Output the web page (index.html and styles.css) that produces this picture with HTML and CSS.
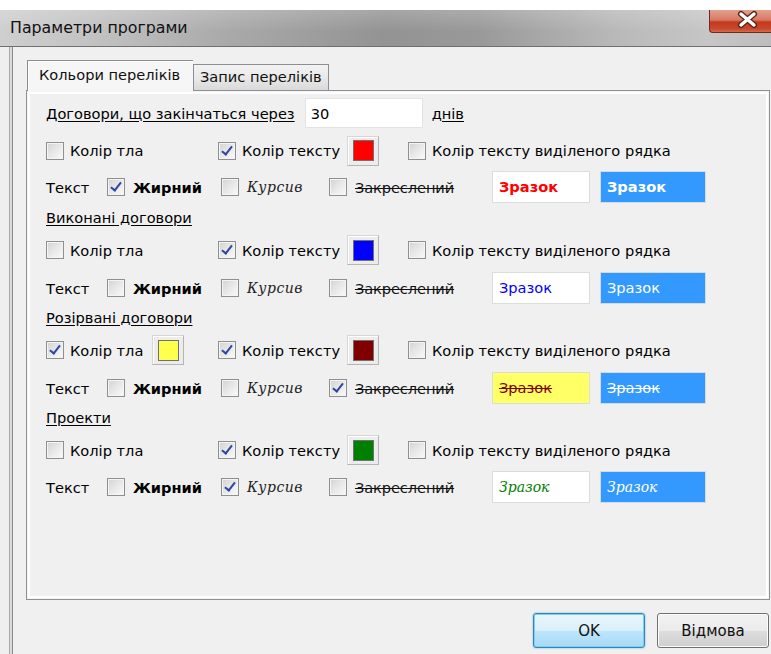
FILE: index.html
```html
<!DOCTYPE html>
<html lang="uk">
<head>
<meta charset="utf-8">
<title>Параметри програми</title>
<link rel="stylesheet" href="styles.css">
</head>
<body>
<div class="window">
  <div class="titlebar">
    <span class="title">Параметри програми</span>
    <button class="close" aria-label="Закрити">
      <svg width="62" height="23" viewBox="0 0 62 23">
        <path d="M31 4 L44 15 M44 4 L31 15" stroke="#5b2418" stroke-width="6" stroke-linecap="round" fill="none"/>
        <path d="M31 4 L44 15 M44 4 L31 15" stroke="#fff" stroke-width="3.4" stroke-linecap="round" fill="none"/>
      </svg>
    </button>
  </div>
  <div class="frame-body">
    <div class="frame"></div>
    <div class="client">
      <div class="tabs">
        <div class="tab active">Кольори переліків</div>
        <div class="tab">Запис переліків</div>
      </div>
      <div class="panel">
        <div class="row row-days">
          <span class="u">Договори, що закінчаться через</span>
          <input class="num" type="text" value="30">
          <span class="u">днів</span>
        </div>

        <!-- поточні договори -->
        <div class="row row-colors first">
          <label class="opt"><span class="cb"></span>Колір тла</label>
          <label class="opt"><span class="cb on"></span>Колір тексту<span class="swatch"><i style="background:#ff0000"></i></span></label>
          <label class="opt"><span class="cb"></span>Колір тексту виділеного рядка</label>
        </div>
        <div class="row row-text first">
          <span>Текст</span>
          <label class="opt"><span class="cb on"></span><b>Жирний</b></label>
          <label class="opt"><span class="cb"></span><span class="it">Курсив</span></label>
          <label class="opt"><span class="cb"></span><span class="st">Закреслений</span></label>
          <span class="sample bold" style="color:#ff0000">Зразок</span>
          <span class="sample sel bold">Зразок</span>
        </div>

        <div class="row hdr"><span class="u">Виконані договори</span></div>
        <div class="row row-colors">
          <label class="opt"><span class="cb"></span>Колір тла</label>
          <label class="opt"><span class="cb on"></span>Колір тексту<span class="swatch"><i style="background:#0000ff"></i></span></label>
          <label class="opt"><span class="cb"></span>Колір тексту виділеного рядка</label>
        </div>
        <div class="row row-text">
          <span>Текст</span>
          <label class="opt"><span class="cb"></span><b>Жирний</b></label>
          <label class="opt"><span class="cb"></span><span class="it">Курсив</span></label>
          <label class="opt"><span class="cb"></span><span class="st">Закреслений</span></label>
          <span class="sample" style="color:#0000ff">Зразок</span>
          <span class="sample sel">Зразок</span>
        </div>

        <div class="row hdr"><span class="u">Розірвані договори</span></div>
        <div class="row row-colors">
          <label class="opt"><span class="cb on"></span>Колір тла<span class="swatch wide"><i style="background:#ffff4d"></i></span></label>
          <label class="opt"><span class="cb on"></span>Колір тексту<span class="swatch"><i style="background:#800000"></i></span></label>
          <label class="opt"><span class="cb"></span>Колір тексту виділеного рядка</label>
        </div>
        <div class="row row-text">
          <span>Текст</span>
          <label class="opt"><span class="cb"></span><b>Жирний</b></label>
          <label class="opt"><span class="cb"></span><span class="it">Курсив</span></label>
          <label class="opt"><span class="cb on"></span><span class="st">Закреслений</span></label>
          <span class="sample strike" style="color:#800000;background:#ffff66">Зразок</span>
          <span class="sample sel strike">Зразок</span>
        </div>

        <div class="row hdr"><span class="u">Проекти</span></div>
        <div class="row row-colors">
          <label class="opt"><span class="cb"></span>Колір тла</label>
          <label class="opt"><span class="cb on"></span>Колір тексту<span class="swatch"><i style="background:#008000"></i></span></label>
          <label class="opt"><span class="cb"></span>Колір тексту виділеного рядка</label>
        </div>
        <div class="row row-text last">
          <span>Текст</span>
          <label class="opt"><span class="cb"></span><b>Жирний</b></label>
          <label class="opt"><span class="cb on"></span><span class="it">Курсив</span></label>
          <label class="opt"><span class="cb"></span><span class="st">Закреслений</span></label>
          <span class="sample script" style="color:#008000">Зразок</span>
          <span class="sample sel script">Зразок</span>
        </div>
      </div>
      <div class="footer">
        <button class="btn default">OK</button>
        <button class="btn">Відмова</button>
      </div>
    </div>
  </div>
</div>
</body>
</html>
```
FILE: styles.css
```css
* { box-sizing: border-box; }

html, body {
  margin: 0;
  padding: 0;
  background: #fff;
  overflow: hidden;
}

body {
  width: 771px;
  height: 654px;
  font-family: "DejaVu Sans", Verdana, sans-serif;
  font-size: 14.6px;
  color: #000;
}

.window {
  margin-top: 10px;
  height: 644px;
  display: flex;
  flex-direction: column;
}

/* Aero-style title bar */
.titlebar {
  height: 37px;
  flex: none;
  display: flex;
  align-items: flex-start;
  background:
    linear-gradient(to bottom, rgba(255,255,255,0.18), rgba(255,255,255,0) 60%),
    linear-gradient(to right, #cfcfcf 0%, #c2c2c2 12%, #a9a9a9 30%, #939393 50%, #999 62%, #b9b9b9 80%, #c6c6c6 92%, #bdbdbd 100%);
  border-bottom: 1px solid #6f6f6f;
}

.title {
  margin: 8px 0 0 10px;
  font-size: 15.8px;
  color: #111;
}

.close {
  margin-left: auto;
  width: 62px;
  height: 23px;
  padding: 0;
  border: 1px solid #6d2a20;
  border-top: none;
  border-right: none;
  border-radius: 0 0 0 4px;
  background: linear-gradient(to bottom, #e2a08f 0%, #d77a62 45%, #c4391f 55%, #c9482c 85%, #d86a4c 100%);
  display: block;
}
.close svg { display: block; }

.frame-body {
  flex: 1;
  display: flex;
}

.frame {
  width: 13px;
  flex: none;
  background: linear-gradient(to right, #efefef 0 9px, #a9a9a9 9px 10px, #d9d9d9 10px 12px, #8a8a8a 12px 13px);
}

.client {
  flex: 1;
  background: #f0f0f0;
  padding: 13px 1px 0 13px;
  display: flex;
  flex-direction: column;
}

/* tab strip */
.tabs {
  display: flex;
  align-items: flex-end;
  height: 30px;
  padding-left: 1px;
  position: relative;
  z-index: 1;
}

.tab {
  height: 26px;
  padding-top: 3px;
  font-size: 14.6px;
  color: #111;
  border: 1px solid #8c8e94;
  border-bottom: none;
  background: linear-gradient(to bottom, #f3f3f3 0%, #e9e9e9 50%, #d9d9d9 100%);
}

.tab.active {
  height: 31px;
  margin-bottom: -1px;
  width: 166px;
  padding: 5px 0 0 11px;
  background: #f6f6f6;
  border-right: none;
  box-shadow: inset 1px 1px 0 #fff;
}

.tab:not(.active) {
  width: 136px;
  padding-left: 6px;
}

.panel {
  height: 510px;
  border: 1px solid #8e9096;
  box-shadow: inset 0 0 0 1px #f4f4f4, inset 0 0 0 3px #fff;
  background: #f0f0f0;
  padding: 3px 0 0 19px;
}

.row {
  display: flex;
  align-items: center;
  white-space: nowrap;
}

.u { text-decoration: underline; text-underline-offset: 2px; }

.row-days { height: 38px; }
.row-days .num {
  width: 118px;
  height: 30px;
  margin: 0 9px 0 10px;
  border: 1px solid #e3e3e3;
  background: #fff;
  font: inherit;
  padding: 1px 5px 0;
  color: #000;
}

.hdr { height: 24px; }

.row-colors {
  height: 42px;
  display: grid;
  grid-template-columns: 172px 190px auto;
  align-items: center;
}
.row-colors.first { height: 37px; }

.row-text {
  height: 34px;
  display: grid;
  grid-template-columns: 61px 114px 108px 163px 110px auto;
  align-items: center;
}
.row-text.first { height: 36px; }
.row-text.last { height: 20px; }

.opt {
  display: flex;
  align-items: center;
  gap: 6px;
}
.row-text .opt { gap: 8px; }

/* checkbox */
.cb {
  width: 18px;
  height: 18px;
  flex: none;
  border: 1px solid #8f8f8f;
  background: linear-gradient(135deg, #d2d2d2 0%, #e6e6e6 45%, #fafafa 100%);
  box-shadow: inset 0 0 0 1px #f4f4f4;
  position: relative;
}
.cb.on::after {
  content: "";
  position: absolute;
  left: 5px;
  top: 1px;
  width: 4px;
  height: 9px;
  border: solid #2b47a3;
  border-width: 0 2.5px 2.5px 0;
  transform: rotate(38deg);
}

/* colour picker button */
.swatch {
  width: 32px;
  height: 30px;
  margin-left: 1px;
  flex: none;
  display: flex;
  align-items: center;
  justify-content: center;
  border: 1px solid #d6d6d6;
  border-right-color: #b5b5b5;
  border-bottom-color: #b5b5b5;
  background: #ececec;
  box-shadow: inset 1px 1px 0 #fff;
}
.swatch.wide { margin-left: 3px; }
.swatch i {
  width: 21px;
  height: 21px;
  border: 1px solid #707070;
}

.it {
  font-family: "DejaVu Serif", "Liberation Serif", serif;
  font-style: italic;
  font-size: 14px;
  letter-spacing: 0.5px;
  color: #222;
}

.st {
  text-decoration: line-through;
  font-size: 14.6px;
  letter-spacing: -0.1px;
  color: #111;
}

b { font-weight: bold; }

.sample {
  height: 32px;
  width: 98px;
  display: flex;
  align-items: center;
  padding: 0 0 1px 6px;
  background: #fff;
  border: 1px solid #dcdcdc;
}
.sample.sel {
  width: 106px;
  margin-left: -2px;
  background: #3399ff;
  color: #fff;
  border-color: #d4dbe4;
}
.sample.bold { font-weight: bold; }
.sample.strike { text-decoration: line-through; }
.sample.script {
  font-family: "DejaVu Serif", "Liberation Serif", serif;
  font-style: italic;
  font-size: 14px;
}

.footer {
  display: flex;
  justify-content: flex-end;
  gap: 12px;
  padding: 13px 1px 0 0;
}

.btn {
  width: 112px;
  height: 35px;
  font-family: "DejaVu Sans", Verdana, sans-serif;
  font-size: 15px;
  color: #111;
  border: 1px solid #707070;
  border-radius: 3px;
  background: linear-gradient(to bottom, #f2f2f2 0%, #ebebeb 50%, #dddddd 51%, #cfcfcf 100%);
  box-shadow: inset 0 0 0 1px #fcfcfc;
}
.btn.default {
  border-color: #3c7fb1;
  background: linear-gradient(to bottom, #eaf6fd 0%, #d9f0fc 50%, #bee6fd 51%, #a7d9f5 100%);
  box-shadow: inset 0 0 0 1px #7ad0f5, 0 0 2px #48b5ea;
}
```
